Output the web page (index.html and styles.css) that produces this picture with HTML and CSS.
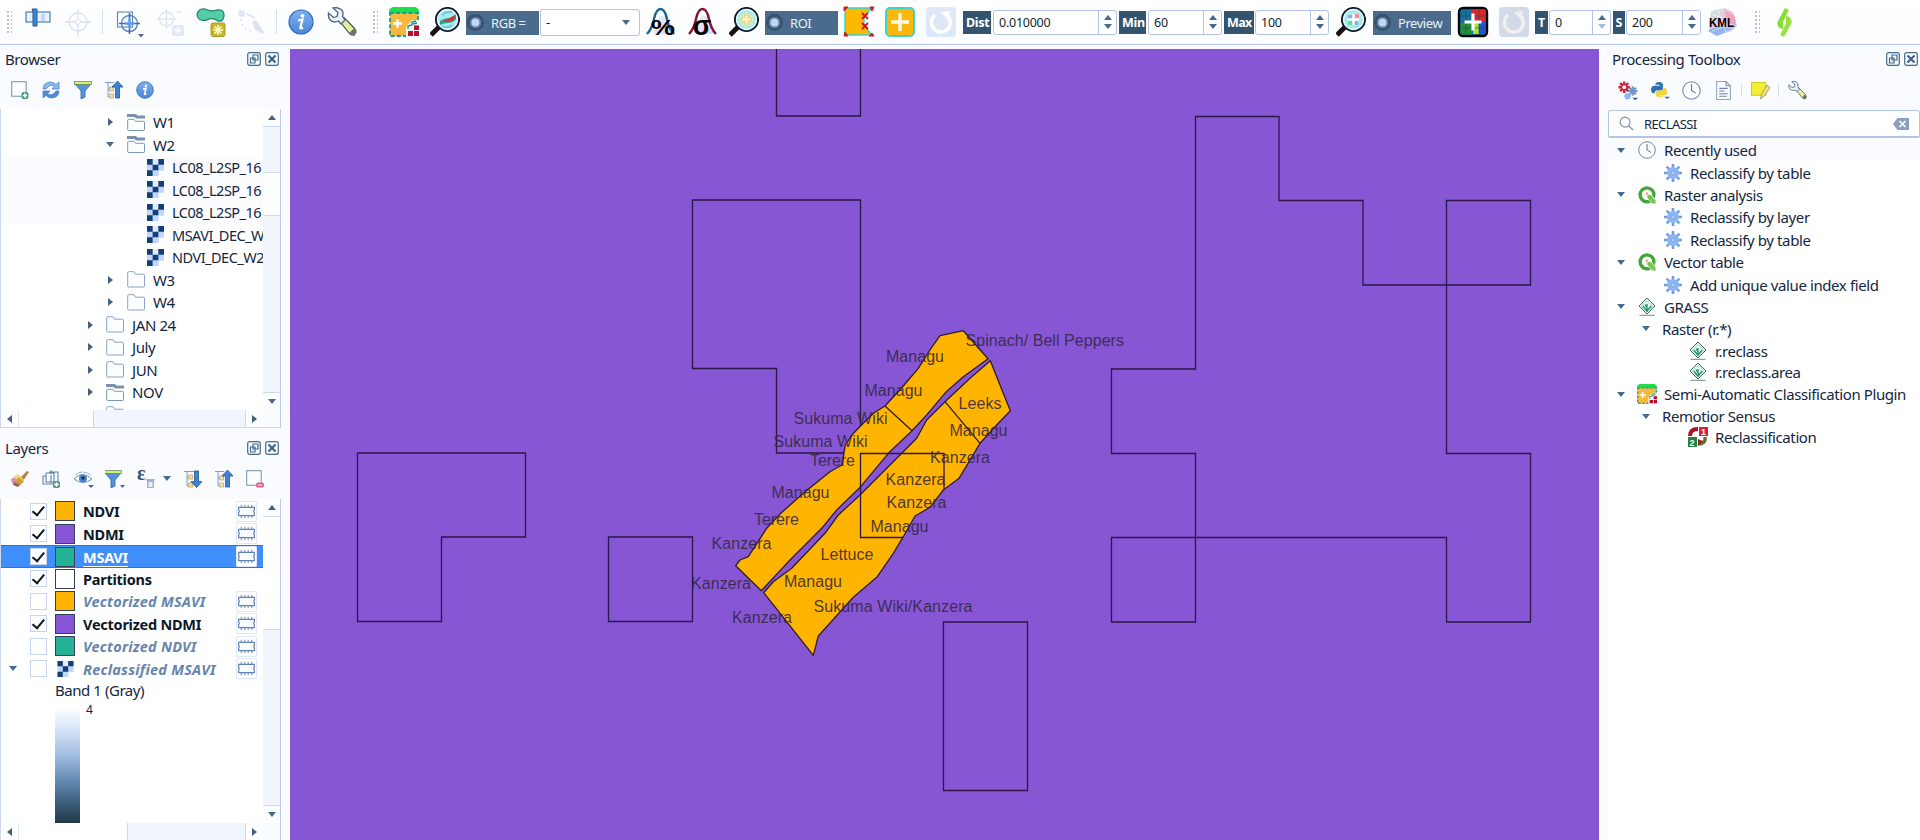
FILE: index.html
```html
<!DOCTYPE html>
<html lang="en">
<head>
<meta charset="utf-8">
<title>QGIS</title>
<link rel="stylesheet" href="styles.css">
</head>
<body>
<svg class="defs" aria-hidden="true">
  <defs>
    <linearGradient id="blueBall" x1="0" y1="0" x2="0" y2="1"><stop offset="0" stop-color="#7fb0ee"/><stop offset="1" stop-color="#4a86dc"/></linearGradient>
    <linearGradient id="soft" x1="0" y1="0" x2="1" y2="1"><stop offset="0" stop-color="#b8f0d8"/><stop offset=".5" stop-color="#f3c0e0"/><stop offset="1" stop-color="#9fc4ff"/></linearGradient>
  </defs>
  <symbol id="info" viewBox="0 0 26 26"><circle cx="13" cy="13" r="12" fill="url(#blueBall)" stroke="#2f6db8" stroke-width="1.2"/><circle cx="14.4" cy="6.8" r="1.9" fill="#fff"/><path d="M10 11.500l4.500-1-2.200 8.200q0 1.300 2.700-.2" fill="none" stroke="#fff" stroke-width="2.200"/></symbol>
  <symbol id="wrench" viewBox="0 0 30 30"><path d="M12.500 14l4.500-3.500L28 22q2 3-.5 5t-5-.5z" fill="#e4efa0" stroke="#4a5a50" stroke-width="1.200"/><path d="M22.500 25.500l4.500-4 2.500 4-2.500 4z" fill="#6b7668"/><path d="M6 1l5 4.500-1 4-3.500 1L1.500 6q-1 8 6 9 2.500 0 4-1l2.500 3 4-4-2.500-3.500Q18 2 9 .5z" fill="#eef3fb" stroke="#4d6580" stroke-width="1.300"/></symbol>
  <symbol id="lens" viewBox="0 0 30 30"><path d="M10 19L1 28" stroke="#1c1310" stroke-width="5"/><circle cx="17.500" cy="12.500" r="11.600" fill="#d4f6f7" stroke="#111c28" stroke-width="1.900"/><circle cx="17.500" cy="12.500" r="9.800" fill="#a9e8ee" stroke="#e9ffff" stroke-width="1"/></symbol>
  <symbol id="scp" viewBox="0 0 30 30"><path d="M0 5q0-4 4-5h22q4 1 4 5v3H0z" fill="#1edc4c"/><rect x="1" y="6" width="28" height="23" fill="#f6b83c"/><rect x="1" y="6" width="28" height="23" fill="none" stroke="#169c92" stroke-width="1.800" stroke-dasharray="4 2.200"/><path d="M4 16.500h9M8.500 12v9" stroke="#fff" stroke-width="2.400"/><path d="M17 30V20l6-7h7v17z" fill="#eef8f4"/><path d="M19 22v-3l4-1v-3l4-1M24 17l4-1" stroke="#1b8f86" stroke-width="1.300" fill="none"/><path d="M25 18.500h5V23h-5zM19 24h5v5h-5zM25 24h5v5h-5z" fill="#b50f33"/></symbol>
  <symbol id="redo" viewBox="0 0 30 30"><rect width="30" height="30" rx="4" fill="#dfe8f6"/><path d="M9 8a9.500 9.500 0 1 0 11-.5" fill="none" stroke="#fff" stroke-width="3.400"/><path d="M15 5l9-1-2 9z" fill="#fff"/></symbol>
  <symbol id="refresh" viewBox="0 0 18 18"><path d="M1 8Q1 2 8 1q4 0 6 2.500L17 1v7h-7l2.500-2.500Q8 2 4 8z" fill="#8db7ee" stroke="#3f78bf" stroke-width=".7"/><path d="M17 10q0 6-7 7-4 0-6-2.500L1 17v-7h7l-2.500 2.500Q10 16 14 10z" fill="#4e8cdc" stroke="#3f78bf" stroke-width=".7"/></symbol>
  <symbol id="funnel" viewBox="0 0 18 18"><path d="M1 3h16l-6 7v6l-4 2v-8z" fill="#5792dc" stroke="#35689f" stroke-width=".8"/><rect x=".5" y=".5" width="17" height="3" fill="#d6ee74" stroke="#57865c" stroke-width=".7"/></symbol>
  <symbol id="up" viewBox="0 0 18 18"><path d="M0 1.500h9M3 2v14h3M3 8h3" fill="none" stroke="#7ba0ce" stroke-width="1"/><path d="M4.500 6h4v4h-4zM4.500 13h4v4h-4z" fill="#f3dfaa" stroke="#caa566" stroke-width=".8"/><path d="M12.500 0l5.500 6h-3.500v11h-4V6H7z" fill="#3f83d0" stroke="#205792" stroke-width=".8"/></symbol>
  <symbol id="down" viewBox="0 0 18 18"><path d="M0 1.500h10M3 2v14h3M3 8h3" fill="none" stroke="#7ba0ce" stroke-width="1"/><path d="M4.500 5h4v4h-4zM4.500 13h4v4h-4z" fill="#f3dfaa" stroke="#caa566" stroke-width=".8"/><path d="M12.500 17.500l5.500-6h-3.500V1h-4v10.500H7z" fill="#3f83d0" stroke="#205792" stroke-width=".8"/></symbol>
  <symbol id="float" viewBox="0 0 14 14"><rect x=".7" y=".7" width="12.600" height="12.600" rx="2" fill="#f5faff" stroke="#446a8c" stroke-width="1.200"/><path d="M6 3h5v5H6zM3.500 6H8v5H3.500z" fill="#f5faff" stroke="#446a8c" stroke-width="1.200"/></symbol>
  <symbol id="close" viewBox="0 0 14 14"><rect x=".7" y=".7" width="12.600" height="12.600" rx="2" fill="#f5faff" stroke="#446a8c" stroke-width="1.200"/><path d="M3.500 3.500l7 7M10.500 3.500l-7 7" stroke="#3a5f82" stroke-width="2.100"/></symbol>
  <symbol id="folder" viewBox="0 0 18 17"><path d="M.7 15V1.700q0-1 1-1H7l1.500 2.500h8q1 0 1 1V15q0 1-1 1h-15q-.8 0-.8-1z" fill="#fcfdff" stroke="#8aa3c4" stroke-width="1"/></symbol>
  <symbol id="folderOpen" viewBox="0 0 18 17"><path d="M0 0h9l1.500 1.500H18V4.500H9L7.500 3H0z" fill="#7993ae"/><path d="M.7 15.500V6.300q0-1 1-1H7l1.500 2h8q1 0 1 1v7.200q0 1-1 1h-15q-.8 0-.8-1z" fill="#fcfdff" stroke="#7c96b8" stroke-width="1"/></symbol>
  <symbol id="raster" viewBox="0 0 16 16"><path d="M0 0h16v11h-5v5H0z" fill="#c2d5fa"/><path d="M5.500 0h5v5.500h-5z" fill="#e3ebfb"/><path d="M0 0h5.300v5.300H0zM10.700 0H16v5.300h-5.300zM5.300 5.300h5.400v5.400H5.300zM0 10.700h5.300V16H0z" fill="#123f74"/></symbol>
  <symbol id="chip" viewBox="0 0 20 20"><rect x=".5" y=".5" width="19" height="19" rx="1" fill="#fff" stroke="#e0e8f6"/><path d="M5 3.500V6M8.300 3.500V6M11.600 3.500V6M15 3.500V6M5 14v2.500M8.300 14v2.500M11.600 14v2.500M15 14v2.500" stroke="#7d9bc4" stroke-width="1.100"/><path d="M2.500 6h15v3q-1.500 1 0 2v3h-15v-3q1.500-1 0-2z" fill="#f7faff" stroke="#6484b0" stroke-width="1.100"/></symbol>
  <symbol id="gear" viewBox="0 0 18 18"><path d="M9 0v18M0 9h18M2.600 2.600l12.800 12.800M15.400 2.600L2.600 15.400" stroke="#6f9fe2" stroke-width="2.600"/><circle cx="9" cy="9" r="6" fill="#8db6f0"/><circle cx="9" cy="9" r="2" fill="#b4d0f7" stroke="#6595d8" stroke-width=".6"/></symbol>
  <symbol id="q" viewBox="0 0 18 18"><circle cx="9" cy="8.800" r="6.900" fill="#fff" stroke="#43a53c" stroke-width="3.400"/><circle cx="9" cy="8" r="1.400" fill="#e99b54"/><path d="M9 8.500h4l5 6v3.500h-3.500L9 12z" fill="#7cc456" stroke="#fff" stroke-width=".8"/></symbol>
  <symbol id="grass" viewBox="0 0 18 18"><path d="M9 0L17 8 9 16 1 8z" fill="#e4f7f2" stroke="#44675f" stroke-width="1"/><path d="M9 2.500L14.800 8 9 14 3.200 8z" fill="none" stroke="#9fccc0" stroke-width=".7"/><path d="M1.500 17.300h15" stroke="#6d8a86"/><path d="M9 14V6M9 13L4.800 8M9 13l4.200-5M9 10L7 6.500" stroke="#26956b" stroke-width="1.300" fill="none"/></symbol>
  <symbol id="clock" viewBox="0 0 18 18"><circle cx="9" cy="9" r="8.300" fill="#fbfdff" stroke="#7189ab" stroke-width="1"/><path d="M9 3v6l4 2.500" fill="none" stroke="#57759c" stroke-width="1"/></symbol>
</svg>

<div class="app">
  <header class="toolbar">
    <i class="handle m6"></i>
    <svg class="ic m13" viewBox="0 0 26 30"><rect x="1" y="5" width="24" height="10" fill="#e8f2fc" stroke="#4a7fb8" stroke-width="1.200"/><path d="M7 2h5v17H8V5z" fill="#3f86d0" stroke="#1f5a92"/><path d="M16 7h4v7h-4z" fill="#c3d4f3"/></svg>
    <svg class="ic m14 faded" viewBox="0 0 26 30"><circle cx="13" cy="15" r="9" fill="none" stroke="#7f9fc8" stroke-width="1.300"/><path d="M0 15h11M15 15h11M13 2v11M13 17v12" stroke="#7f9fc8" stroke-width="1.300"/><circle cx="13" cy="15" r="2.500" fill="none" stroke="#7f9fc8"/></svg>
    <i class="sep m11"></i>
    <svg class="ic wide m13" viewBox="0 0 28 30"><rect x="1.500" y="5" width="15" height="15" fill="#f8fbff" stroke="#5b84b8" stroke-width="1.100"/><circle cx="13.500" cy="16.500" r="8" fill="none" stroke="#5588c4" stroke-width="1.400"/><path d="M3 16.500h21M13.500 6v21" stroke="#3a6faf" stroke-width="1.600"/><path d="M9 16.500h9M13.500 12v9" stroke="#5fa0ee" stroke-width="2.400"/><path d="M22 27h6l-3 3.500z" fill="#46698c"/></svg>
    <svg class="ic wide m13 faded" viewBox="0 0 28 30"><circle cx="9.500" cy="12" r="7" fill="none" stroke="#8fa9cc" stroke-width="1.300"/><path d="M0 12h19M9.500 2v20M20 6l4-2" stroke="#8fa9cc" stroke-width="1.300"/><rect x="15" y="18" width="12" height="11" rx="2" fill="#a9bddb"/><path d="M18 23.500h6M21 20.500v6" stroke="#fff" stroke-width="2"/></svg>
    <svg class="ic big m11" viewBox="0 0 30 30"><path d="M1 8q1-7 8-6 6 3 12 1 7-1 7 5 0 7-6 6-6-4-11-1-9 2-10-5z" fill="#52cda8" stroke="#27876c" stroke-width="1.300"/><rect x="15" y="16" width="14" height="13.500" rx="2" fill="#c5b92c" stroke="#a69b1c"/><path d="M22 18v10M17 23h10M18.500 19.500l7 7M25.500 19.500l-7 7" stroke="#fff8c8" stroke-width="1.600"/></svg>
    <svg class="ic m12 faded" viewBox="0 0 26 30"><path d="M1 4h5v5H1z" fill="#a9bddb" stroke="#8fa9cc"/><path d="M3 12q1 12 13 12" fill="none" stroke="#8fa9cc" stroke-width="1.600" stroke-dasharray="2 3"/><path d="M9 7l8 4" stroke="#8fa9cc" stroke-width="1.800"/><path d="M14 15l4-2 8 12-1 2-8-4z" fill="#94aac8"/></svg>
    <i class="sep m12"></i>
    <svg class="ic m11"><use href="#info"/></svg>
    <svg class="ic big m13"><use href="#wrench"/></svg>
    <i class="handle m15"></i>
    <svg class="ic big m11"><use href="#scp"/></svg>
    <svg class="ic big m11" viewBox="0 0 30 30"><use href="#lens"/><path d="M10 14q5-3 9-3t7-4v5q-3 4-8 4t-8 2z" fill="#2b9f86"/><path d="M10 13q5 1 8-1t7-4l-1 5q-4 2-7 1z" fill="#d7303b"/><path d="M12 8q5-4 10-3M12 19q5 3 10-1" stroke="#6ccad8" stroke-width="2" fill="none"/></svg>
    <span class="radio w73 m6"><b></b><em>RGB =</em></span>
    <span class="combo"><em>-</em><i class="tri-d"></i></span>
    <svg class="ic big m6" viewBox="0 0 30 30"><path d="M7 27L13 9l8 0 7 18z" fill="url(#soft)" opacity=".55"/><path d="M1 27Q6 22 8 12q2-10 6.500-10T21 12q2 10 7 15" fill="none" stroke="#176887" stroke-width="2.400"/><text class="ov" x="17" y="28" textLength="24" lengthAdjust="spacingAndGlyphs">%</text></svg>
    <svg class="ic big m12" viewBox="0 0 30 30"><path d="M7 27L13 9l8 0 7 18z" fill="url(#soft)" opacity=".55"/><path d="M1 27Q6 22 8 12q2-10 6.500-10T21 12q2 10 7 15" fill="none" stroke="#7d1434" stroke-width="2.400"/><text class="ov sig" x="14" y="27.500">σ</text></svg>
    <svg class="ic big m11" viewBox="0 0 30 30"><use href="#lens"/><circle cx="17.500" cy="12.500" r="7" fill="#d3eac2"/><path d="M12.500 12.500h10M17.500 7.500v10" stroke="#f2d273" stroke-width="4.500"/><path d="M13.500 12.500h8M17.500 8.500v8" stroke="#fff8dd" stroke-width="2"/></svg>
    <span class="radio w73 m6"><b></b><em>ROI</em></span>
    <svg class="ic big m6" viewBox="0 0 30 30"><path d="M1 1h27l-8 8v10l8 9H1z" fill="#fcb900" stroke="#35d5d4" stroke-width="1.500"/><path d="M0 0h4L0 4zM30 0h-4l2 4zM0 29h4l-3-4zM30 29h-5l3-3z" fill="#c3202c" stroke="#c3202c"/><path d="M18 6l6 6M24 6l-6 6M18 16l6 6M24 16l-6 6" stroke="#d9131d" stroke-width="1.900"/></svg>
    <svg class="ic big m11" viewBox="0 0 30 30"><rect x="1" y="1" width="28" height="28" rx="4" fill="#fcb80a" stroke="#3fd2c8" stroke-width="2"/><path d="M6 15h18M15 6v18" stroke="#fffbe6" stroke-width="3.400"/></svg>
    <svg class="ic big m11"><use href="#redo"/></svg>
    <span class="tag w28 m7">Dist</span><span class="spin w124 m2"><em>0.010000</em><i class="arrows"></i></span>
    <span class="tag w27 m2">Min</span><span class="spin w74 m2"><em>60</em><i class="arrows"></i></span>
    <span class="tag max w30 m2">Max</span><span class="spin w74 m1"><em>100</em><i class="arrows"></i></span>
    <svg class="ic big m7" viewBox="0 0 30 30"><use href="#lens"/><path d="M12 8h5v4h-5zM18 14h4v4h-4z" fill="#7ab4e8"/><path d="M18 7h5v5h-5z" fill="#ef93a4"/><path d="M12 14h5v4h-5z" fill="#67d69b"/><path d="M12 12.500h11M17.500 7v11" stroke="#fff" stroke-width="2.400"/></svg>
    <span class="radio w78 m7"><b></b><em>Preview</em></span>
    <svg class="ic big m7" viewBox="0 0 30 30"><rect x="1" y="1" width="28" height="28" rx="4" fill="#176f9c" stroke="#05070b" stroke-width="2.400"/><path d="M13 2.500h14.500v12H17z" fill="#e0242c"/><path d="M2.500 16H14v11.500H2.500z" fill="#258f36"/><path d="M15 15h6v12h-6z" fill="#a7e628"/><path d="M21 15h6.500v12H21z" fill="#1b55d2"/><path d="M8 3v24M3 9h24M3 21h24M21 3v24" stroke="#194a5a" stroke-width=".6"/><path d="M6.500 15h17M15 6.500v17" stroke="#fff" stroke-width="3.200"/></svg>
    <svg class="ic big m11 redo2"><use href="#redo"/></svg>
    <span class="tag mid w13 m6">T</span><span class="spin w62 m1"><em>0</em><i class="arrows dim"></i></span>
    <span class="tag mid w12 m2">S</span><span class="spin w75 m1"><em>200</em><i class="arrows"></i></span>
    <svg class="ic big m7" viewBox="0 0 30 30"><path d="M3 4l14-3 8 4 4 14-6 5-14 5-8-6z" fill="url(#soft)"/><path d="M16 3l11 6 1 9-8-2z" fill="#ef99a5" opacity=".7"/><path d="M3 22l10-3 10 3-14 7-9-5z" fill="#8fb6ed"/><path d="M5 8l15 4M4 24l20-7M10 3l8 22" stroke="#fff" opacity=".6"/><text class="kml" x="1" y="20" textLength="25" lengthAdjust="spacingAndGlyphs">KML</text></svg>
    <i class="handle m16"></i>
    <svg class="ic leaf m16" viewBox="0 0 17 32"><path d="M1 16L9 1l4 2-6 12v8q-6-1-6-7z" fill="#8bdc31"/><path d="M16 16L8 31l-4-2 6-12V9q6 1 6 7z" fill="#9be13e"/></svg>
  </header>

  <main class="work">
    <aside class="left">
      <section class="panel browser">
        <div class="title"><span>Browser</span><svg class="wb"><use href="#float"/></svg><svg class="wb"><use href="#close"/></svg></div>
        <div class="tools">
          <svg viewBox="0 0 18 18"><rect x=".7" y=".7" width="14.500" height="14.500" fill="#fbfdff" stroke="#6d8fb8"/><rect x="10.500" y="11" width="7" height="7" rx="2" fill="#4f9b76"/><path d="M11.800 14.500h4.400M14 12.300v4.400" stroke="#fff" stroke-width="1.500"/></svg>
          <svg><use href="#refresh"/></svg><svg><use href="#funnel"/></svg><svg><use href="#up"/></svg><svg viewBox="0 0 26 26"><use href="#info"/></svg>
        </div>
        <div class="box">
          <div class="view tree">
            <div class="row i3"><i class="tri-r"></i><svg class="fo"><use href="#folderOpen"/></svg>W1</div>
            <div class="row i3"><i class="tri-d"></i><svg class="fo"><use href="#folderOpen"/></svg>W2</div>
            <div class="row i4 alt"><svg class="ra"><use href="#raster"/></svg>LC08_L2SP_16</div>
            <div class="row i4 alt"><svg class="ra"><use href="#raster"/></svg>LC08_L2SP_16</div>
            <div class="row i4 alt"><svg class="ra"><use href="#raster"/></svg>LC08_L2SP_16</div>
            <div class="row i4"><svg class="ra"><use href="#raster"/></svg>MSAVI_DEC_W</div>
            <div class="row i4"><svg class="ra"><use href="#raster"/></svg>NDVI_DEC_W2</div>
            <div class="row i3"><i class="tri-r"></i><svg class="fo"><use href="#folder"/></svg>W3</div>
            <div class="row i3"><i class="tri-r"></i><svg class="fo"><use href="#folder"/></svg>W4</div>
            <div class="row i2"><i class="tri-r"></i><svg class="fo"><use href="#folder"/></svg>JAN 24</div>
            <div class="row i2"><i class="tri-r"></i><svg class="fo"><use href="#folder"/></svg>July</div>
            <div class="row i2"><i class="tri-r"></i><svg class="fo"><use href="#folder"/></svg>JUN</div>
            <div class="row i2"><i class="tri-r"></i><svg class="fo"><use href="#folderOpen"/></svg>NOV</div>
            <div class="row i2 last"><i></i><svg class="fo"><use href="#folder"/></svg></div>
          </div>
          <div class="vs"><i class="btn"><i class="tri-u"></i></i><i class="groove v-a"></i><i class="thumb v-b"></i><i class="groove fill"></i><i class="btn"><i class="tri-d"></i></i></div>
          <div class="hs"><i class="btn"><i class="tri-l"></i></i><i class="thumb h-a"></i><i class="groove fill"></i><i class="btn"><i class="tri-r"></i></i></div>
        </div>
      </section>

      <section class="panel layers">
        <div class="title"><span>Layers</span><svg class="wb"><use href="#float"/></svg><svg class="wb"><use href="#close"/></svg></div>
        <div class="tools lay">
          <svg viewBox="0 0 18 18"><path d="M9 8l7-7 2 1-6 9z" fill="#b98245"/><path d="M1 8l6-4 6 6-3 4z" fill="#f0d879"/><path d="M0 9l4-1 7 6-4 2-6-3z" fill="#e388a8"/><path d="M8 15l-4-4 4-4 5 5z" fill="#c9a23c"/><path d="M3 12l6 3-2 2-5-2z" fill="#8f6a4c"/></svg>
          <svg viewBox="0 0 18 18"><path d="M4 3h8v11H1V6h3M4 3v9h8M9 0v4M7 2h9v10M9 5v8" fill="none" stroke="#5c83ae" stroke-width="1.100"/><rect x="11" y="11" width="7" height="7" rx="2" fill="#4f9b76"/><path d="M12.200 14.500h4.600M14.500 12.200v4.600" stroke="#fff" stroke-width="1.500"/></svg>
          <svg class="w20" viewBox="0 0 20 18"><path d="M0 9Q8 0 18 9 9 16 0 9z" fill="#f4f9ff" stroke="#6f93bd"/><circle cx="9" cy="8.500" r="4" fill="#4a84cc"/><circle cx="9" cy="8" r="1.800" fill="#17395f"/><path d="M1 5Q8-1 17 5" fill="none" stroke="#9ab5d6"/><path d="M14 15h6l-3 3z" fill="#46698c"/></svg>
          <svg class="w20" viewBox="0 0 20 18"><use href="#funnel" width="18" height="18" x="-1"/><path d="M15 15h5l-2.500 3z" fill="#46698c"/></svg>
          <svg class="ep" viewBox="0 0 18 18"><text class="eps" x="0" y="10">ε</text><path d="M8 9h10l-1 2v7h-7v-7z" fill="#9fb2cf"/><path d="M11.500 12h4v5h-4z" fill="#e8eef8"/></svg>
          <i class="tri-d"></i>
          <svg><use href="#down"/></svg><svg><use href="#up"/></svg>
          <svg viewBox="0 0 18 18"><rect x=".7" y=".7" width="14.500" height="14.500" fill="#fbfdff" stroke="#6d8fb8"/><rect x="10" y="12.500" width="8" height="5" rx="2" fill="#dc5b7c"/><path d="M11.500 15h5" stroke="#fff"/></svg>
        </div>
        <div class="box">
          <div class="view list">
            <div class="lrow"><i></i><b class="cb on"></b><b class="sw or"></b><span>NDVI</span><svg><use href="#chip"/></svg></div>
            <div class="lrow"><i></i><b class="cb on"></b><b class="sw pu"></b><span>NDMI</span><svg><use href="#chip"/></svg></div>
            <div class="lrow sel"><i></i><b class="cb on"></b><b class="sw te"></b><span>MSAVI</span><svg><use href="#chip"/></svg></div>
            <div class="lrow"><i></i><b class="cb on"></b><b class="sw"></b><span>Partitions</span></div>
            <div class="lrow off"><i></i><b class="cb"></b><b class="sw or"></b><span>Vectorized MSAVI</span><svg><use href="#chip"/></svg></div>
            <div class="lrow"><i></i><b class="cb on"></b><b class="sw pu"></b><span>Vectorized NDMI</span><svg><use href="#chip"/></svg></div>
            <div class="lrow off"><i></i><b class="cb"></b><b class="sw te"></b><span>Vectorized NDVI</span><svg><use href="#chip"/></svg></div>
            <div class="lrow off"><i class="tri-d"></i><b class="cb"></b><svg class="ras"><use href="#raster"/></svg><span>Reclassified MSAVI</span><svg><use href="#chip"/></svg></div>
            <div class="band">Band 1 (Gray)</div>
            <div class="ramp"><i></i><span>4</span></div>
          </div>
          <div class="vs"><i class="btn"><i class="tri-u"></i></i><i class="thumb v-c"></i><i class="groove fill"></i><i class="btn"><i class="tri-d"></i></i></div>
          <div class="hs"><i class="btn"><i class="tri-l"></i></i><i class="thumb h-b"></i><i class="groove fill"></i><i class="btn"><i class="tri-r"></i></i></div>
        </div>
      </section>
    </aside>

    <svg class="map" viewBox="290 49 1309 791">
      <rect x="290" y="49" width="1309" height="791" fill="#8656d4"/>
      <g class="cells">
        <path d="M776.500 49v67h84V49"/>
        <path d="M860.500 453.500V200h-168v168.500h84V453h84"/>
        <path d="M357.500 453h168v84h-84v84.500h-84z"/>
        <path d="M608.500 537h84v84.500h-84z"/>
        <path d="M943.500 622h84v168.500h-84z"/>
        <path d="M1195.500 116.500h83.500v84h84v84.500h167.500v-84.500h-84V453.500h84V622h-84v-84.500H1111.500V622h84V453.500h-84V369h84z"/>
      </g>
      <g class="field">
        <path d="M940 335.700L963.300 330.700 988 358.700 963.300 376.700 945.700 392.300 926.700 415 912 430.700 888.300 453.300 871.700 473.300 860.700 486.700 836.700 510 821.700 528.300 790 560 761.300 590.700 735.700 565.700 740 560 748.300 556.700 766.700 528.300 780 514 803.300 493.300 830 471.700 842 465 845.300 445 852.700 434 863.300 423.300 874 412.700 885 406 903.300 386 918.300 368.300 930 350z"/>
        <path d="M990.300 360.700L1010.300 410.700 995 426.700 980 443.300 959 478.300 943.300 490 930 507.300 915 516 903.300 536.700 893.300 553.300 877.300 576.700 853.300 597.300 818.300 636 813.300 655.300 763.700 592.700 773.300 581.700 791.700 568.300 825 533.300 838.300 515 860 495 900 455 916.700 438.300 926.700 420 945 401.700 970 378.300z"/>
        <path d="M885 406l27 24.700M945 401.700l35 41.600"/>
      </g>
      <path class="cells" d="M903 537.500h-42.500v-84h83.500v36"/>
      <g class="labels">
        <text x="965.500" y="345.500" textLength="158.500">Spinach/ Bell Peppers</text>
        <text x="886" y="362" textLength="58">Managu</text>
        <text x="864.500" y="395.500" textLength="58">Managu</text>
        <text x="958.500" y="408.500" textLength="43">Leeks</text>
        <text x="793.500" y="424" textLength="94">Sukuma Wiki</text>
        <text x="949.500" y="436" textLength="58">Managu</text>
        <text x="773.500" y="446.500" textLength="94">Sukuma Wiki</text>
        <text x="810" y="466" textLength="45">Terere</text>
        <text x="930" y="463" textLength="60">Kanzera</text>
        <text x="885.500" y="485" textLength="60">Kanzera</text>
        <text x="771.500" y="498" textLength="58">Managu</text>
        <text x="886.500" y="507.500" textLength="60">Kanzera</text>
        <text x="754" y="525" textLength="45">Terere</text>
        <text x="870.500" y="532" textLength="58">Managu</text>
        <text x="711.500" y="548.500" textLength="60">Kanzera</text>
        <text x="820.500" y="560" textLength="53">Lettuce</text>
        <text x="691" y="588.500" textLength="60">Kanzera</text>
        <text x="784" y="587" textLength="58">Managu</text>
        <text x="813.500" y="612" textLength="159">Sukuma Wiki/Kanzera</text>
        <text x="732" y="622.500" textLength="60">Kanzera</text>
      </g>
    </svg>

    <aside class="right">
      <div class="title"><span>Processing Toolbox</span><svg class="wb"><use href="#float"/></svg><svg class="wb"><use href="#close"/></svg></div>
      <div class="tools proc">
        <svg viewBox="0 0 21 19"><g stroke="#cf1f3a" stroke-width="2.600"><path d="M6.500 0v12M.5 6h12M2.300 1.800l8.400 8.400M10.700 1.800l-8.400 8.400"/></g><circle cx="6.500" cy="6" r="2" fill="#fff"/><g stroke="#6f97c9" stroke-width="2.200"><path d="M15.500 5v10M10.500 10h10M12 6.500l7 7M19 6.500l-7 7"/></g><g stroke="#8fb7ef" stroke-width="1.800"><path d="M10 12v7M6.500 15.500h7M7.500 13l5 5M12.500 13l-5 5"/></g><path d="M15 17h6l-3 2.500z" fill="#2d4f74"/></svg>
        <svg viewBox="0 0 20 18"><path d="M8.500 0q4 0 4 3v4q0 2-2 2H6q-2 0-2 3H2Q0 11 0 8t3-4h6V3H4.500q0-3 4-3z" fill="#2f70b0"/><path d="M9 16q-4 0-4-3v-2q0-2 2-2h4q2 0 2-3h2q2 1 2 4 0 4-3 4H9v1h4q0 1-4 1z" fill="#f4d43b"/><path d="M14 15.500h6l-3 2.500z" fill="#46698c"/></svg>
        <svg><use href="#clock"/></svg>
        <svg viewBox="0 0 18 18"><path d="M2.500.5h9l4 4v13h-13z" fill="#fbfdff" stroke="#8aa3c4"/><path d="M11.500.5v4h4M5 7h8M5 9.500h5M5 12h8M5 14.500h7" fill="none" stroke="#6683aa"/></svg>
        <i class="sep"></i>
        <svg viewBox="0 0 18 18"><path d="M.5 1.500h13.500v12H.5z" fill="#f4ed35" stroke="#d1c922"/><path d="M9 17l1-5 5-8 3 2-5 8z" fill="#f3dd74" stroke="#8c9a70" stroke-width=".8"/></svg>
        <i class="sep"></i>
        <svg viewBox="0 0 30 30"><use href="#wrench"/></svg>
      </div>
      <div class="search"><svg viewBox="0 0 16 16"><circle cx="6.500" cy="6.500" r="5.300" fill="none" stroke="#7590b5" stroke-width="1.200"/><path d="M10.500 10.500l4.500 4.500" stroke="#7590b5" stroke-width="1.400"/></svg><span>RECLASSI</span><svg class="clr" viewBox="0 0 16 12"><path d="M0 6l4.500-6H16v12H4.500z" fill="#8ba0c0"/><path d="M6.500 3l6 6M12.500 3l-6 6" stroke="#fff" stroke-width="1.600"/></svg></div>
      <div class="ptree">
        <div class="prow alt"><i class="tri-d"></i><svg><use href="#clock"/></svg><span>Recently used</span></div>
        <div class="prow l2"><svg><use href="#gear"/></svg><span>Reclassify by table</span></div>
        <div class="prow"><i class="tri-d"></i><svg><use href="#q"/></svg><span>Raster analysis</span></div>
        <div class="prow l2"><svg><use href="#gear"/></svg><span>Reclassify by layer</span></div>
        <div class="prow l2"><svg><use href="#gear"/></svg><span>Reclassify by table</span></div>
        <div class="prow"><i class="tri-d"></i><svg><use href="#q"/></svg><span>Vector table</span></div>
        <div class="prow l2"><svg><use href="#gear"/></svg><span>Add unique value index field</span></div>
        <div class="prow"><i class="tri-d"></i><svg><use href="#grass"/></svg><span>GRASS</span></div>
        <div class="prow sub"><i class="tri-d"></i><span>Raster (r.*)</span></div>
        <div class="prow l3"><svg><use href="#grass"/></svg><span>r.reclass</span></div>
        <div class="prow l3"><svg><use href="#grass"/></svg><span>r.reclass.area</span></div>
        <div class="prow"><i class="tri-d"></i><svg class="p20"><use href="#scp"/></svg><span>Semi-Automatic Classification Plugin</span></div>
        <div class="prow sub"><i class="tri-d"></i><span>Remotior Sensus</span></div>
        <div class="prow l3 end"><svg class="p20" viewBox="0 0 20 20"><path d="M11 0h9v9h-9z" fill="#d9203a"/><path d="M0 10h9v10H0z" fill="#24833a"/><path d="M2 9q0-7 8-7" fill="none" stroke="#a91225" stroke-width="4"/><path d="M10 17q8 0 7-7" fill="none" stroke="#6c6a2a" stroke-width="3.500"/><path d="M10 12l5 2-5 5z" fill="#8a2a28"/><text class="d1" x="13" y="8">1</text><text class="d1" x="1.500" y="18.500">2</text></svg><span>Reclassification</span></div>
      </div>
    </aside>
  </main>
</div>
</body>
</html>
```
FILE: styles.css
```css
* { box-sizing: border-box; }
body { margin: 0; font-family: "Noto Sans", "Open Sans", sans-serif; font-size: 15px; color: #14263f; background: #fafbff; }
i, em { font-style: normal; }
svg { display: block; flex: none; }
.defs { position: absolute; width: 0; height: 0; }
.app { width: 1920px; height: 840px; display: flex; flex-direction: column; overflow: hidden; }

/* Toolbar */
.toolbar { height: 45px; flex: none; display: flex; align-items: center; border-bottom: 1px solid #b4c6e6; background: linear-gradient(#fff, #fbfcff); }
.toolbar > * { flex: none; }
.ic { width: 26px; height: 30px; }
.ic.wide { width: 28px; overflow: visible; }
.ic.big { width: 30px; overflow: visible; }
.ic.leaf { width: 17px; height: 31px; }
.faded { opacity: .3; }
.redo2 { filter: brightness(.94); }
.handle { width: 6px; height: 24px; background: radial-gradient(circle, #b4c2da 0 .8px, transparent 1.200px) 0 0 / 4px 4px; }
.sep { width: 1px; height: 24px; background: #d3deef; }
.m1 { margin-left: 1px; } .m2 { margin-left: 2px; } .m6 { margin-left: 6px; } .m7 { margin-left: 7px; }
.m11 { margin-left: 11px; } .m12 { margin-left: 12px; } .m13 { margin-left: 13px; }
.m14 { margin-left: 14px; } .m15 { margin-left: 15px; } .m16 { margin-left: 16px; }
.w12 { width: 12px; } .w13 { width: 13px; } .w27 { width: 27px; } .w28 { width: 28px; } .w30 { width: 30px; }
.w62 { width: 62px; } .w73 { width: 73px; } .w74 { width: 74px; } .w75 { width: 75px; } .w78 { width: 78px; } .w124 { width: 124px; }
.radio { height: 24px; margin-top: 1px; background: #4a6b8b; color: #e8f2fc; display: flex; align-items: center; font-size: 13px; }
.radio b { width: 17px; height: 17px; margin: 0 7px 0 1px; border: 3px solid #36536f; border-radius: 50%; background: #c1d6f4; box-shadow: inset 0 0 0 1.500px #5d7c9f; }
.radio em { letter-spacing: -.45px; white-space: nowrap; }
.combo { width: 100px; height: 27px; margin-left: 1px; border: 1px solid #b0c4e6; border-radius: 3px; background: #fff; display: flex; align-items: center; justify-content: space-between; padding: 0 9px 0 5px; font-size: 13px; }
.tag { height: 23px; background: #34536f; color: #fff; font-weight: 700; font-size: 12.500px; line-height: 23px; letter-spacing: -.3px; padding-left: 3px; white-space: nowrap; }
.tag.max { letter-spacing: -.6px; }
.tag.mid { padding-left: 0; text-align: center; letter-spacing: 0; }
.spin { height: 25px; border: 1px solid #b0c4e6; border-radius: 3px; background: #fff; display: flex; justify-content: space-between; padding-left: 5px; font-size: 12.500px; line-height: 24px; letter-spacing: -.25px; color: #111f33; }
.arrows { width: 18px; border-left: 1px solid #b0c4e6; display: grid; align-content: center; justify-items: center; gap: 4px; }
.arrows::before, .arrows::after { content: ""; border: 4.500px solid transparent; border-top-width: 0; border-bottom: 5px solid #46698c; }
.arrows::after { border-bottom: 0; border-top: 5px solid #46698c; }
.arrows.dim::after { border-top-color: #a9bedb; }
.ov { font: 700 22px "Liberation Sans", sans-serif; text-anchor: middle; }
.ov.sig { font-size: 27px; }
.kml { font: 700 12px "Liberation Sans", sans-serif; }

/* Panels */
.work { flex: 1; min-height: 0; display: grid; grid-template-columns: 290px 1309px 321px; }
.left { display: flex; flex-direction: column; min-height: 0; }
.panel { width: 281px; display: flex; flex-direction: column; }
.browser { height: 383px; }
.layers { height: 412px; }
.title { height: 28px; flex: none; display: flex; align-items: center; padding-left: 5px; }
.title span { flex: 1; letter-spacing: -.4px; }
.wb { width: 14px; height: 14px; margin-left: 4px; }
.browser .title { padding-right: 2px; }
.tools { height: 36px; display: flex; align-items: center; padding: 1px 0 3px 11px; gap: 13.300px; flex: none; }
.tools svg { width: 18px; height: 18px; }
.tools .w20 { width: 20px; }
.layers .title { height: 40px; padding-right: 2px; }
.tools.lay { height: 31px; padding: 0 0 10px 11px; gap: 13.300px; }
.tools.lay .w20 { margin-right: -2px; }
.tools.lay .ep { margin-left: 1px; }
.tools.lay .tri-d { margin: 0 -1px 0 -5px; }
.box { flex: 1; min-height: 0; display: grid; grid-template: minmax(0, 1fr) 17px / minmax(0, 1fr) 17px; border: 1px solid #ccd8ee; border-top: 0; border-right-color: #b9c9e6; }
.layers .box { border-bottom: 0; }
.view { background: #fff; overflow: hidden; min-height: 0; }
.tree { padding-top: 2px; }
.row { height: 22.500px; display: flex; align-items: center; white-space: nowrap; letter-spacing: -.4px; }
.row > i:first-child { flex: none; }
.row.alt { background: #fbfcff; }
.i2 { padding-left: 87px; } .i3 { padding-left: 107px; } .i4 { padding-left: 146px; font-size: 14.500px; letter-spacing: -.5px; }
.row .tri-r { margin-right: 14px; }
.row .tri-d { margin: 0 13px 0 -2px; }
.row.last { align-items: flex-start; padding-left: 105px; }
.row.last .fo { margin-top: 2px; }
.fo { width: 18px; height: 17px; margin-right: 8px; }
.ra { width: 17px; height: 17px; margin-right: 8px; }
.i2 .tri-r { margin-right: 13px; }
.tri-r { width: 0; border: 4.500px solid transparent; border-left: 5px solid #46607e; border-right: 0; }
.tri-l { width: 0; border: 4.500px solid transparent; border-right: 5px solid #46607e; border-left: 0; }
.tri-d { width: 0; border: 4.500px solid transparent; border-top: 5px solid #46698c; border-bottom: 0; }
.tri-u { width: 0; border: 4.500px solid transparent; border-bottom: 5px solid #46607e; border-top: 0; }
.vs { display: flex; flex-direction: column; }
.hs { display: flex; border-right: 0; }
.btn { width: 17px; height: 17px; flex: none; display: grid; place-content: center; background: #fcfdff; }
.groove { background: #f1f5fd; border: 1px solid #ccd9f0; border-width: 1px 0; }
.hs .groove { border-width: 0 1px; }
.thumb { background: #fff; }
.fill { flex: 1; }
.v-a { height: 47px; } .v-b { height: 42px; } .v-c { height: 113px; border-top: 1px solid #ccd9f0; }
.h-a { width: 75px; border-left: 1px solid #dde6f5; } .h-b { width: 109px; border-left: 1px solid #dde6f5; }
.eps { font: 700 20px "Liberation Serif", serif; fill: #334e74; }

/* Layer list */
.list { padding-top: 1px; }
.lrow { height: 22.500px; display: grid; grid-template-columns: 29px 25px 28px 1fr 27px; align-items: center; font-weight: 700; font-size: 14.500px; letter-spacing: -.25px; color: #0c1727; }
.lrow span { white-space: nowrap; grid-column: 4; }
.lrow > svg:last-child { width: 21px; height: 21px; }
.lrow .tri-d { margin-left: 8px; }
.cb { width: 17px; height: 17px; border: 1px solid #c6d6f1; background: #fff; display: grid; place-items: center; }
.cb.on::after { content: ""; width: 5px; height: 10px; border: solid #0d1622; border-width: 0 2px 2px 0; transform: rotate(40deg) translate(-1px, -1px); }
.sw { width: 20px; height: 20px; border: 1px solid #34415c; background: #fff; }
.or { background: #ffb400; } .pu { background: #8656d4; } .te { background: #25b195; }
.sel { background: #3f8ffc; color: #fff; border: 1px solid #1d78e4; border-width: 1px 0; }
.sel span { text-decoration: underline; text-underline-offset: 3px; }
.lrow.off { color: #6585ac; font-style: italic; letter-spacing: .22px; }
.ras { width: 17px; height: 16px; margin-left: 2px; }
.band { padding-left: 54px; height: 26px; line-height: 21px; letter-spacing: -.45px; }
.ramp { display: flex; padding-left: 54px; gap: 6px; font-size: 12px; line-height: 8px; }
.ramp i { width: 25px; height: 120px; background: linear-gradient(#fff, #dbe7fa 18%, #a4bfe4 40%, #6a8fb8 60%, #3d607f 80%, #1d3240); }

/* Map */
.map { width: 1309px; height: 791px; margin-top: 4px; }
.cells { fill: none; stroke: #2b1648; stroke-width: 1.300; }
.field { fill: #ffb400; stroke: #2f1c20; stroke-width: 1.300; stroke-linejoin: round; }
.labels { font: 16px "Liberation Sans", Arial, sans-serif; fill: #33273f; fill-opacity: .88; }

/* Processing toolbox */
.right { padding-left: 9px; display: flex; flex-direction: column; min-width: 0; }
.right .title { padding: 0 2px 0 4px; }
.right .tools { gap: 12.500px; padding: 0 0 3px 10px; height: 37px; }
.right .tools svg { width: 19px; height: 19px; }
.right .tools svg:first-child { width: 20px; }
.right .sep { height: 14px; margin: 0 -4px 0 -4px; }
.search { height: 28px; border: 1px solid #b3c5e4; border-bottom-width: 2px; border-radius: 2px; background: #fff; display: flex; align-items: center; padding: 0 10px 0 10px; font-size: 13px; }
.search svg { width: 15px; height: 15px; }
.search span { flex: 1; padding-left: 10px; letter-spacing: -.6px; }
.search .clr { width: 16px; height: 12px; }
.ptree { flex: 1; background: #fff; padding-top: 1px; }
.prow { height: 22.400px; display: flex; align-items: center; padding-left: 9px; white-space: nowrap; letter-spacing: -.4px; }
.prow.alt { background: #fafbff; }
.prow svg { width: 18px; height: 18px; margin: 0 8px 0 13px; }
.prow svg.p20 { width: 20px; height: 20px; margin: 0 7px 0 12px; }
.l2 { padding-left: 43px; }
.l3 { padding-left: 68px; height: 21.600px; }
.sub { padding-left: 34px; height: 21.600px; }
.sub span { padding-left: 12px; }
.end { height: 20px; }
.d1 { font: 700 9px "Liberation Sans", sans-serif; fill: #fff; }
```
